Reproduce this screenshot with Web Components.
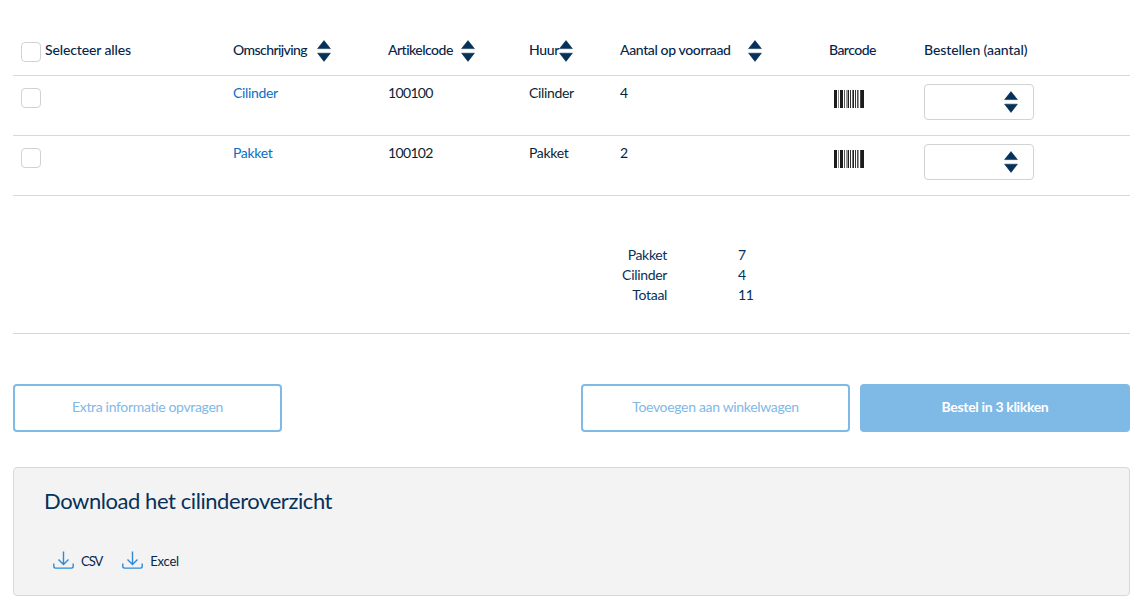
<!DOCTYPE html>
<html lang="nl">
<head>
<meta charset="utf-8">
<title>Cilinderoverzicht</title>
<style>
  html, body { margin: 0; background: #fff; overflow: hidden; }
  body { font: 14px/20px Lato, "Noto Sans", sans-serif; letter-spacing: -.33px; color: #0b1f33; }
  order-page { display: block; padding: 30px 13px 0; }
  .all { display: flex; gap: 4px; letter-spacing: -.12px; }
  .all check-box { margin-top: 2px; }
  .digits { letter-spacing: -.66px; }
</style>
</head>
<body>
<order-page>
  <stock-row header>
    <span slot="check" class="all"><check-box></check-box><span>Selecteer alles</span></span>
    <span slot="name" style="letter-spacing:-.58px">Omschrijving<sort-arrows style="margin-left:10px"></sort-arrows></span>
    <span slot="code" style="letter-spacing:-.52px">Artikelcode<sort-arrows style="margin-left:8px"></sort-arrows></span>
    <span slot="rent">Huur<sort-arrows></sort-arrows></span>
    <span slot="stock" style="letter-spacing:-.37px">Aantal op voorraad<sort-arrows style="margin-left:17px"></sort-arrows></span>
    <span slot="barcode" style="letter-spacing:-.55px">Barcode</span>
    <span slot="order" style="letter-spacing:-.08px">Bestellen (aantal)</span>
  </stock-row>
  <stock-row>
    <check-box slot="check" style="margin-top:5px"></check-box>
    <a slot="name">Cilinder</a>
    <span slot="code" class="digits">100100</span>
    <span slot="rent">Cilinder</span>
    <span slot="stock">4</span>
    <barcode-icon slot="barcode"></barcode-icon>
    <qty-input slot="order"></qty-input>
  </stock-row>
  <stock-row>
    <check-box slot="check" style="margin-top:5px"></check-box>
    <a slot="name">Pakket</a>
    <span slot="code" class="digits">100102</span>
    <span slot="rent">Pakket</span>
    <span slot="stock">2</span>
    <barcode-icon slot="barcode"></barcode-icon>
    <qty-input slot="order"></qty-input>
  </stock-row>
  <stock-summary></stock-summary>
  <action-bar>
    <action-button slot="left" variant="outline">Extra informatie opvragen</action-button>
    <action-button slot="right" variant="outline">Toevoegen aan winkelwagen</action-button>
    <action-button slot="right" variant="solid">Bestel in 3 klikken</action-button>
  </action-bar>
  <download-panel heading="Download het cilinderoverzicht">
    <download-link style="letter-spacing:-1.05px">CSV</download-link>
    <download-link style="letter-spacing:-.2px">Excel</download-link>
  </download-panel>
</order-page>

<script>
// small helper, every element just sets its html in the constructor
class Base extends HTMLElement {
  constructor(html) {
    super();
    this.attachShadow({ mode: "open" }).innerHTML = html;
  }
}

class SortArrows extends Base {
  constructor() {
    super(`<style>
      :host{display:inline-block;width:14px;height:22px;vertical-align:middle}
      svg{display:block}
    </style>
    <svg width="14" height="22" viewBox="0 0 14 22"><path fill="#06315a" stroke="#06315a" stroke-width=".6" stroke-linejoin="round" d="M7 .6 13.4 8.6H.6zM.6 13.2h12.8L7 21.4z"/></svg>`);
  }
}
customElements.define("sort-arrows", SortArrows);

class CheckBox extends Base {
  constructor() {
    super(`<style>
      :host{display:inline-block;flex:none;width:18px;height:18px;border:1px solid #d2d2d2;border-radius:4px;background:#fff}
    </style>`);
  }
}
customElements.define("check-box", CheckBox);

class BarcodeIcon extends Base {
  constructor() {
    const bars = [[0,3,"#1c1c1c"],[4,1,"#8a8a8a"],[6,3,"#1c1c1c"],[10,1,"#555"],[12,2,"#999"],[14,1,"#222"],[16,1,"#333"],[18,1,"#777"],[19,1,"#222"],[21,1,"#333"],[23,1,"#555"],[24,1,"#999"],[26,1,"#444"],[27,3,"#1c1c1c"]];
    super(`<style>
      :host{display:block;width:30px;height:18px;margin:7px 0 0 5px}
      svg{display:block}
    </style>
    <svg width="30" height="18" viewBox="0 0 30 18">${bars.map(b => `<rect x="${b[0]}" width="${b[1]}" height="18" fill="${b[2]}"/>`).join("")}</svg>`);
  }
}
customElements.define("barcode-icon", BarcodeIcon);

class QtyInput extends Base {
  constructor() {
    super(`<style>
      :host{display:flex;justify-content:flex-end;align-items:center;box-sizing:border-box;width:110px;height:36px;margin-top:1px;padding-right:15px;border:1px solid #d2d2d2;border-radius:4px;background:#fff}
    </style><sort-arrows></sort-arrows>`);
  }
}
customElements.define("qty-input", QtyInput);

class StockRow extends Base {
  constructor() {
    super(`<style>
      :host{display:grid;grid-template-columns:212px 155px 141px 91px 209px 95px 214px;height:60px;box-sizing:border-box;border-bottom:1px solid #d8d8d8}
      :host([header]){height:46px;color:#06264a;font-weight:500}
      .c{padding:7px 8px 0;box-sizing:border-box}
      :host([header]) .c{padding-top:10px}
      ::slotted(a){color:#0a6fc2}
    </style>
    <div class="c"><slot name="check"></slot></div>
    <div class="c"><slot name="name"></slot></div>
    <div class="c"><slot name="code"></slot></div>
    <div class="c"><slot name="rent"></slot></div>
    <div class="c"><slot name="stock"></slot></div>
    <div class="c"><slot name="barcode"></slot></div>
    <div class="c"><slot name="order"></slot></div>`);
  }
}
customElements.define("stock-row", StockRow);

class StockSummary extends Base {
  constructor() {
    const rows = [["Pakket", "7"], ["Cilinder", "4"], ["Totaal", "11"]];
    super(`<style>
      :host{display:grid;grid-template-columns:654px 30px;justify-content:start;column-gap:71px;padding:49px 0 28px;border-bottom:1px solid #d8d8d8;color:#06315a}
      .l{text-align:right}
    </style>${rows.map(r => `<div class="l">${r[0]}</div><div>${r[1]}</div>`).join("")}`);
  }
}
customElements.define("stock-summary", StockSummary);

class ActionBar extends Base {
  constructor() {
    super(`<style>
      :host{display:flex;justify-content:space-between;padding-top:50px}
      div{display:flex;gap:10px}
    </style><div><slot name="left"></slot></div><div><slot name="right"></slot></div>`);
  }
}
customElements.define("action-bar", ActionBar);

class ActionButton extends Base {
  constructor() {
    super(`<style>
      :host{display:flex;align-items:center;justify-content:center;box-sizing:border-box;width:269px;height:48px;padding-bottom:2px;border:2px solid #7fb9e6;border-radius:4px;color:#7fb9e6;background:#fff}
      :host([variant=solid]){width:270px;background:#7fb9e6;color:#fff;font-weight:700}
    </style><slot></slot>`);
  }
}
customElements.define("action-button", ActionButton);

class DownloadLink extends Base {
  constructor() {
    super(`<style>
      :host{display:inline-flex;align-items:center;gap:7px;color:#06264a;font-size:13px}
      svg{display:block;margin-top:-3px}
    </style>
    <svg width="21" height="18" viewBox="0 0 21 18" fill="none" stroke="#2f8ad6" stroke-width="1.4"><path d="M10.5 .5v12.5M5.5 8.5l5 5 5-5M.8 12.5v2.8c0 1.1.7 1.8 1.8 1.8h15.8c1.1 0 1.8-.7 1.8-1.8v-2.8"/></svg>
    <slot></slot>`);
  }
}
customElements.define("download-link", DownloadLink);

class DownloadPanel extends Base {
  constructor() {
    super(`<style>
      :host{display:block;box-sizing:border-box;height:129px;margin-top:35px;padding:18px 30px 0;background:#f3f3f3;border:1px solid #d8d8d8;border-radius:4px}
      h2{margin:0;font:400 22px/30px Lato,"Noto Sans",sans-serif;letter-spacing:-.43px;color:#06315a}
      div{display:flex;gap:20px;margin:35px 0 0 9px}
    </style><h2></h2><div><slot></slot></div>`);
  }
  connectedCallback() {
    this.shadowRoot.querySelector("h2").textContent = this.getAttribute("heading");
  }
}
customElements.define("download-panel", DownloadPanel);

class OrderPage extends Base {
  constructor() { super(`<style>:host{display:block}</style><slot></slot>`); }
}
customElements.define("order-page", OrderPage);
</script>
</body>
</html>
